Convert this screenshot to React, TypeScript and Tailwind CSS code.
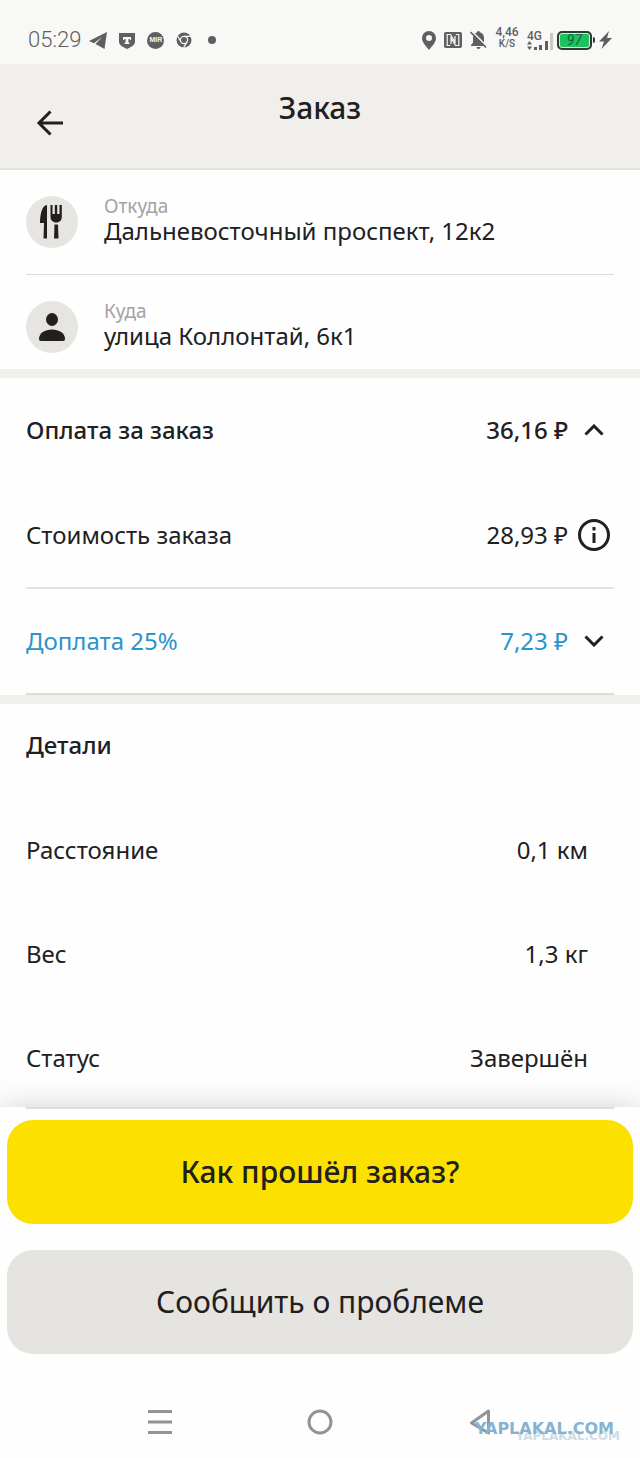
import React, { useState } from "react";

interface AddressProps {
  label: string;
  value: string;
  icon: React.ReactNode;
}

interface DetailProps {
  label: string;
  value: string;
}

const details = [
  { label: "Расстояние", value: "0,1 км" },
  { label: "Вес", value: "1,3 кг" },
  { label: "Статус", value: "Завершён" },
];

const StatusBar = () => (
  <div className="flex h-16 items-center bg-[#f8f8f6] px-7 pt-4 text-[#5f5f5f]">
    <span className="mr-2 font-[Roboto] text-[22px] leading-8 font-light">
      05:29
    </span>
    <div className="flex flex-1 items-center gap-3">
      {/* Telegram */}
      <svg width="18" height="17" viewBox="0 0 18 17" fill="currentColor">
        <path d="M18 0 0 9l5 2.200L13 5 6.500 12l9 5z" />
      </svg>
      {/* T bank */}
      <svg width="16" height="17" viewBox="0 0 16 17">
        <path d="M0 1h16v9c0 3-4 5-8 7-4-2-8-4-8-7z" fill="currentColor" />
        <path d="M4 5h8v3h-1.200V7H9.400v3.500h1V12H5.600v-1.500h1V7H5.200v1H4z" fill="#f8f8f6" />
      </svg>
      <span className="flex size-[17px] items-center justify-center rounded-full bg-[#5f5f5f] font-['Liberation_Sans'] text-[7px] font-bold text-[#f8f8f6]">
        MIR
      </span>
      {/* Chrome */}
      <svg width="16" height="16" viewBox="0 0 16 16">
        <circle cx="8" cy="8" r="7.500" fill="currentColor" />
        <g fill="none" stroke="#f8f8f6" strokeWidth="1.200">
          <circle cx="8" cy="8" r="3.600" />
          <path d="M8 4.400h7M4.900 9.800 1.400 3.700M11.100 9.800 7.600 15.900" />
        </g>
      </svg>
      <span className="ml-1 size-2 rounded-full bg-[#5f5f5f]" />
    </div>
    <div className="flex items-center">
      <svg width="14" height="19" viewBox="0 0 14 19" fill="currentColor">
        <path
          fillRule="evenodd"
          d="M7 0a7 7 0 0 1 7 7c0 4.600-4 8-7 12-3-4-7-7.400-7-12a7 7 0 0 1 7-7zm0 4a3 3 0 1 0 0 6 3 3 0 0 0 0-6z"
        />
      </svg>
      {/* NFC */}
      <svg className="ml-2" width="18" height="16" viewBox="0 0 18 16">
        <rect width="18" height="16" rx="2" fill="currentColor" />
        <path
          d="M2.500 2.500h4L11 10V4M15.500 13.500h-4L7 6v6M3.200 2.500v11h3M14.800 13.500v-11h-3"
          fill="none"
          stroke="#f8f8f6"
          strokeWidth="1.200"
        />
      </svg>
      {/* Muted bell */}
      <svg className="ml-2" width="17" height="18" viewBox="0 0 17 18">
        <path
          d="M8.500 0c.8 0 1.300.5 1.300 1.300C12.600 2 14 4.200 14 7v4.500l2 2.500v1H1v-1l2-2.500V7c0-2.800 1.400-5 4.200-5.700C7.200.5 7.700 0 8.500 0zM6.500 16h4a2 2 0 0 1-4 0z"
          fill="currentColor"
        />
        <path d="M1.500 0 17 15.500" stroke="#f8f8f6" strokeWidth="1.600" />
        <path d="M.5 1 16 16.500" stroke="currentColor" strokeWidth="1.600" />
      </svg>
      <div className="ml-2 w-6 pb-1 text-center font-[Roboto] leading-[11px] font-medium">
        <div className="text-[12px]">4,46</div>
        <div className="text-[10px]">K/S</div>
      </div>
      {/* Signal */}
      <div className="ml-2 w-[26px] font-[Roboto] text-[12px] leading-[10px] font-medium">
        <div>4G</div>
        <svg width="26" height="9" viewBox="0 0 26 9" className="overflow-visible">
          <path
            d="M2.500 0 5 3.500H0zM2.500 9 0 5.500h5zM7 6h3v3H7zM12 4h3v5h-3zM18 0h3v9h-3z"
            fill="currentColor"
          />
          <path d="M23 -8h3V9h-3z" fill="#c8c8c6" />
        </svg>
      </div>
      <div className="ml-1 flex h-[19px] w-[35px] items-center justify-center rounded-[5px] border-2 border-[#2b3b33] bg-[#1cc35c] font-[Roboto] text-[14px] leading-4 text-[#17613a] italic ring-1 ring-[#d8ecdf] ring-inset">
        97
      </div>
      <span className="ml-px h-[6px] w-[2px] rounded-r bg-[#2b3b33]" />
      <svg className="ml-1" width="13" height="18" viewBox="0 0 13 18" fill="currentColor">
        <path d="M10 0 0 10.500h5L2.500 18 13 7H8z" />
      </svg>
    </div>
  </div>
);

const Address = ({ label, value, icon }: AddressProps) => (
  <div className="flex h-[104px] items-center gap-[26px]">
    <div className="flex size-[52px] shrink-0 items-center justify-center rounded-full bg-[#e6e5e1]">
      {icon}
    </div>
    <div className="pb-1">
      <div className="text-[19px] leading-[22px] text-[#a3a3a3]">{label}</div>
      <div className="text-[24px] leading-[28px]">{value}</div>
    </div>
  </div>
);

const Detail = ({ label, value }: DetailProps) => (
  <div className="flex h-[104px] items-center justify-between pr-[26px]">
    <dt>{label}</dt>
    <dd>{value}</dd>
  </div>
);

const Chevron = ({ up }: { up: boolean }) => (
  <svg
    width="20"
    height="12"
    viewBox="0 0 20 12"
    fill="none"
    stroke="#21201f"
    strokeWidth="3"
  >
    <path d={up ? "M1.500 10.500 10 2l8.500 8.500" : "M1.500 1.500 10 10l8.500-8.500"} />
  </svg>
);

const App = () => {
  const [open, setOpen] = useState(true);
  const [extraOpen, setExtraOpen] = useState(false);

  return (
    <div className="bg-[#fefefe] font-['Noto_Sans',sans-serif] text-[24px] leading-8 text-[#21201f]">
      <StatusBar />

      <header className="grid h-[106px] grid-cols-[1fr_auto_1fr] border-b-2 border-[#e2e1da] bg-[#f0efeb] px-9">
        <button aria-label="Назад" className="mt-[45px] h-7 w-7">
          <svg width="28" height="26" viewBox="0 0 28 26" fill="none" stroke="#21201f" strokeWidth="3">
            <path d="M27 13H3M14.500 1.500 3 13l11.500 11.500" />
          </svg>
        </button>
        <h1 className="mt-6 text-[30px] leading-10 font-medium">Заказ</h1>
      </header>

      <section className="px-[26px]">
        <Address
          label="Откуда"
          value="Дальневосточный проспект, 12к2"
          icon={
            <svg width="24" height="34" viewBox="0 0 24 34" fill="#21201f">
              <path d="M7 0v33.500H3.500L4 18H0C0 10 2 0 7 0z" />
              <path d="M10.500 0h2v9h2.300V0h2.400v9h2.300V0h2.300v12c0 3-2 5.500-5.500 5.500S10.500 15 10.500 12zM14.500 19.500h3.500l.5 14h-4.500z" />
            </svg>
          }
        />
        <hr className="border-[#dddcd9]" />
        <div className="h-[94px]">
          <Address
            label="Куда"
            value="улица Коллонтай, 6к1"
            icon={
              <svg width="26" height="28" viewBox="0 0 26 28" fill="#21201f">
                <ellipse cx="13" cy="6.500" rx="6" ry="6.500" />
                <path d="M0 26c0-6 6-9.500 13-9.500S26 20 26 26c0 1.300-.7 2-2 2H2c-1.300 0-2-.7-2-2z" />
              </svg>
            }
          />
        </div>
      </section>

      <div className="h-[9px] bg-[#f0efeb]" />

      <section className="pr-[30px] pl-[26px]">
        <div className="flex h-[104px] items-center font-medium">
          <h2 className="flex-1">Оплата за заказ</h2>
          <span>36,16 ₽</span>
          <button
            aria-label="Оплата за заказ"
            onClick={() => setOpen(!open)}
            className="ml-[10px] flex h-8 w-8 items-center justify-center"
          >
            <Chevron up={open} />
          </button>
        </div>
        {open && (
          <>
            <div className="flex h-[105px] items-center">
              <span className="flex-1">Стоимость заказа</span>
              <span>28,93 ₽</span>
              <button aria-label="Подробнее" className="ml-[10px]">
                <svg width="32" height="32" viewBox="0 0 32 32" fill="none" stroke="#21201f" strokeWidth="3">
                  <circle cx="16" cy="16" r="14.500" />
                  <path d="M16 8v3.500M16 14v10" />
                </svg>
              </button>
            </div>
            <hr className="-mr-1 border-t-2 border-[#e4e3e2]" />
            <div className="flex h-[104px] items-center text-[#2b93cc]">
              <span className="flex-1">Доплата 25%</span>
              <span>7,23 ₽</span>
              <button
                aria-label="Доплата 25%"
                onClick={() => setExtraOpen(!extraOpen)}
                className="ml-[10px] flex h-8 w-8 items-center justify-center"
              >
                <Chevron up={extraOpen} />
              </button>
            </div>
            <hr className="-mr-1 border-t-2 border-[#dddcdb]" />
          </>
        )}
      </section>

      <div className="h-[9px] bg-[#f0efeb]" />

      <section className="px-[26px]">
        <h2 className="flex h-[94px] items-center pb-3 font-medium">Детали</h2>
        <dl className="h-[309px]">
          {details.map((item) => (
            <Detail key={item.label} label={item.label} value={item.value} />
          ))}
        </dl>
      </section>

      {/* Bottom actions */}
      <footer className="relative bg-[#fefefe] shadow-[0_0_28px_rgba(0,0,0,0.18)]">
        <hr className="mx-[26px] border-t-2 border-[#dedee2]" />
        <div className="flex flex-col gap-[26px] px-[7px] pt-[11px]">
          <button className="h-[104px] rounded-[26px] bg-[#fbe000] text-[30px] font-medium">
            Как прошёл заказ?
          </button>
          <button className="h-[104px] rounded-[26px] bg-[#e5e4e0] text-[30px]">
            Сообщить о проблеме
          </button>
        </div>

        <nav className="relative grid h-[104px] grid-cols-3 items-center px-20 pt-8">
          <button aria-label="Меню" className="flex justify-center">
            <svg width="24" height="26" viewBox="0 0 24 26" fill="#939393">
              <path d="M0 1h24v3H0zM0 11.500h24v3H0zM0 22h24v3H0z" />
            </svg>
          </button>
          <button aria-label="Домой" className="flex justify-center">
            <svg width="26" height="26" viewBox="0 0 26 26" fill="none" stroke="#939393" strokeWidth="3">
              <circle cx="13" cy="13" r="11" />
            </svg>
          </button>
          <button aria-label="Назад" className="flex justify-center">
            <svg width="22" height="26" viewBox="0 0 22 26" fill="none" stroke="#939393" strokeWidth="3">
              <path d="M19.500 2v22L2.500 14z" strokeLinejoin="round" />
            </svg>
          </button>
          <div className="absolute right-5 bottom-4 font-['DejaVu_Sans'] font-bold">
            <div className="absolute right-0 bottom-0 text-[12px] leading-3 text-[#cfdde6]">
              YAPLAKAL.COM
            </div>
            <div className="relative right-[6px] bottom-[5px] text-[16px] leading-4 text-[#86b3d1]">
              YAPLAKAL.COM
            </div>
          </div>
        </nav>
      </footer>
    </div>
  );
};

export default App;
